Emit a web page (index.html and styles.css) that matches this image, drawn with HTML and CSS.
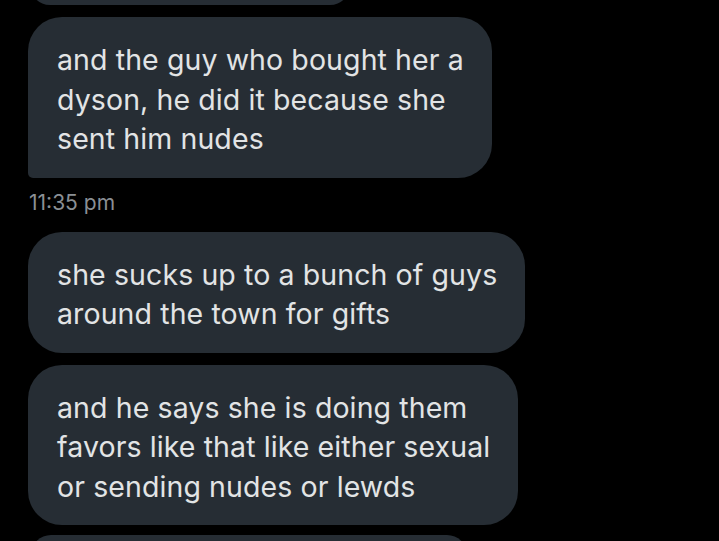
FILE: index.html
```html
<!DOCTYPE html>
<html>
<head>
<meta charset="utf-8">
<link rel="stylesheet" href="styles.css">
</head>
<body>
<div class="thread">
  <div class="bubble bubble-prev"></div>
  <div class="bubble tail">and the guy who bought her a<br>dyson, he did it because she<br>sent him nudes</div>
  <div class="time">11:35 pm</div>
  <div class="bubble">she sucks up to a bunch of guys<br>around the town for gifts</div>
  <div class="bubble">and he says she is doing them<br>favors like that like either sexual<br>or sending nudes or lewds</div>
  <div class="bubble bubble-next"></div>
</div>
</body>
</html>
```
FILE: styles.css
```css
html, body {
  margin: 0;
  padding: 0;
  background: #000;
  height: 100%;
  overflow: hidden;
}
.thread {
  display: flex;
  flex-direction: column;
  align-items: flex-start;
  gap: 12px;
  padding-left: 28px;
  font-family: "Inter", "Roboto", sans-serif;
}
.bubble {
  background: #262d34;
  color: #e2e4e5;
  font-size: 28.5px;
  letter-spacing: 0.1px;
  line-height: 39.5px;
  padding: 23px 28px 19px 29px;
  border-radius: 34px;
  white-space: nowrap;
}
.bubble.tail {
  border-bottom-left-radius: 5px;
}
.bubble-prev {
  width: 264px;
  height: 40px;
  padding: 0 28px;
  margin-top: -35px;
  margin-left: 2px;
}
.bubble-next {
  margin-left: 3px;
  margin-top: -2px;
  width: 380px;
  height: 40px;
  padding: 0 28px;
}
.time {
  color: #8a8f94;
  font-size: 21px;
  line-height: 26px;
  margin: 0 0 4px 1px;
}
```
